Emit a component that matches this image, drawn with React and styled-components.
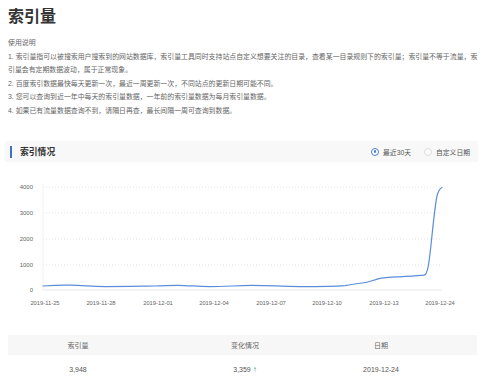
import styled, { createGlobalStyle } from "styled-components";

const GlobalStyle = createGlobalStyle`
  body {
    margin: 0;
    background: #fff;
    font-family: "Liberation Sans", "Noto Sans CJK SC", sans-serif;
    color: #333;
  }
`;

const Page = styled.div`
  width: 500px;
  height: 379px;
  overflow: hidden;
`;

const Intro = styled.div`
  padding: 8px 8px 0;
`;

const Title = styled.h1`
  margin: 0;
  font-size: 16px;
  line-height: 18px;
  font-weight: 700;
  color: #333;
`;

const Notes = styled.div`
  margin-top: 10px;
  max-width: 473px;
  font-size: 6.9px;
  line-height: 13.5px;
  color: #666;
  p {
    margin: 0;
  }
`;

const SectionBar = styled.div`
  margin: 24px 22px 0 5px;
  height: 21px;
  background: #f8f8f8;
  display: flex;
  align-items: center;
  padding: 0 8px 0 5px;
`;

const Marker = styled.span`
  width: 2px;
  height: 12px;
  background: #3d72c4;
  margin-right: 8px;
`;

const SectionTitle = styled.h2`
  margin: 0;
  flex: 1;
  font-size: 8.8px;
  font-weight: 700;
  color: #333;
`;

const RadioGroup = styled.div`
  display: flex;
  align-items: center;
  gap: 13px;
`;

const RadioItem = styled.label`
  display: flex;
  align-items: center;
  gap: 4px;
  font-size: 6.8px;
  color: #555;
`;

const RadioDot = styled.span`
  width: 6px;
  height: 6px;
  border-radius: 50%;
  border: 1px solid ${(p) => (p.checked ? "#4a80d6" : "#ddd")};
  background: #fff;
  display: flex;
  align-items: center;
  justify-content: center;
  &::after {
    content: "";
    width: 2.5px;
    height: 2.5px;
    border-radius: 50%;
    background: ${(p) => (p.checked ? "#4a80d6" : "transparent")};
  }
`;

const ChartSvg = styled.svg`
  display: block;
  margin-top: 16px;
  width: 500px;
  height: 134px;
  font-family: "Liberation Sans", "Noto Sans CJK SC", sans-serif;
`;

const Table = styled.div`
  margin: 23px 23px 0 8px;
  font-size: 7px;
  color: #555;
`;

const Row = styled.div`
  display: grid;
  grid-template-columns: 140px 194px 78px 1fr;
  align-items: center;
  height: ${(p) => (p.head ? "20px" : "28px")};
  background: ${(p) => (p.head ? "#f7f7f7" : "transparent")};
  color: ${(p) => (p.head ? "#666" : "#555")};
`;

const Cell = styled.div`
  text-align: center;
`;

const Up = styled.span`
  color: #2fa84f;
  font-weight: 700;
  font-size: 8px;
  margin-left: 2px;
`;

const notes = [
  "1. 索引量指可以被搜索用户搜索到的网站数据库，索引量工具同时支持站点自定义想要关注的目录，查看某一目录规则下的索引量；索引量不等于流量，索引量会有定期数据波动，属于正常现象。",
  "2. 百度索引数据最快每天更新一次，最近一周更新一次，不同站点的更新日期可能不同。",
  "3. 您可以查询到近一年中每天的索引量数据，一年前的索引量数据为每月索引量数据。",
  "4. 如果已有流量数据查询不到，请隔日再查，最长间隔一周可查询到数据。",
];

const yTicks = [
  { label: "4000", y: 187 },
  { label: "3000", y: 213 },
  { label: "2000", y: 239 },
  { label: "1000", y: 265 },
];

const xTicks = [
  { label: "2019-11-25", x: 45 },
  { label: "2019-11-28", x: 101 },
  { label: "2019-12-01", x: 158 },
  { label: "2019-12-04", x: 214 },
  { label: "2019-12-07", x: 271 },
  { label: "2019-12-10", x: 327 },
  { label: "2019-12-13", x: 384 },
  { label: "2019-12-24", x: 440 },
];

const linePath =
  "M43 286 C55 285.2 62 285 70 285.2 C85 285.6 92 286.6 105 286.6 " +
  "C125 286.6 140 286.2 155 286 C165 285.8 170 285.2 178 285.3 " +
  "C190 285.6 198 286.6 210 286.6 C225 286.6 238 285.4 252 285.4 " +
  "C270 285.4 280 286.5 300 286.6 C320 286.6 335 286.4 345 285.6 " +
  "C352 284.8 356 283.4 362 283 C368 282.6 372 280.5 378 278.8 " +
  "C385 277.4 392 277.2 400 276.8 C410 276.2 418 275.8 424 275.2 " +
  "C428 274.8 429 262 431 245 C433 226 435 205 437 196 " +
  "C438.5 190 440 188.5 442 187.5";

const Chart = () => (
  <ChartSvg viewBox="0 178 500 134">
    {yTicks.map((t) => (
      <g key={t.label}>
        <line
          x1="43"
          x2="442"
          y1={t.y}
          y2={t.y}
          stroke="#dcdcdc"
          strokeWidth="0.8"
          strokeDasharray="1 2"
        />
        <text x="33" y={t.y + 2} fontSize="6" fill="#666" textAnchor="end">
          {t.label}
        </text>
      </g>
    ))}
    <line x1="43" x2="43" y1="184" y2="290" stroke="#eeeeee" strokeWidth="0.8" />
    <line x1="43" x2="442" y1="290" y2="290" stroke="#e2e2e2" strokeWidth="0.8" />
    <text x="33" y="292" fontSize="6" fill="#666" textAnchor="end">
      0
    </text>
    {xTicks.map((t) => (
      <text
        key={t.label}
        x={t.x}
        y="305"
        fontSize="5.8"
        fill="#666"
        textAnchor="middle"
      >
        {t.label}
      </text>
    ))}
    <path
      d={linePath}
      fill="none"
      stroke="#5a8ed8"
      strokeWidth="1.2"
      strokeLinecap="round"
      strokeLinejoin="round"
    />
  </ChartSvg>
);

export default function App() {
  return (
    <Page>
      <GlobalStyle />
      <Intro>
        <Title>索引量</Title>
        <Notes>
          <p>使用说明</p>
          {notes.map((n) => (
            <p key={n}>{n}</p>
          ))}
        </Notes>
      </Intro>
      <SectionBar>
        <Marker />
        <SectionTitle>索引情况</SectionTitle>
        <RadioGroup>
          <RadioItem>
            <RadioDot checked />
            最近30天
          </RadioItem>
          <RadioItem>
            <RadioDot />
            自定义日期
          </RadioItem>
        </RadioGroup>
      </SectionBar>
      <Chart />
      <Table>
        <Row head>
          <Cell>索引量</Cell>
          <Cell>变化情况</Cell>
          <Cell>日期</Cell>
        </Row>
        <Row>
          <Cell>3,948</Cell>
          <Cell>
            3,359<Up>↑</Up>
          </Cell>
          <Cell>2019-12-24</Cell>
        </Row>
      </Table>
    </Page>
  );
}
